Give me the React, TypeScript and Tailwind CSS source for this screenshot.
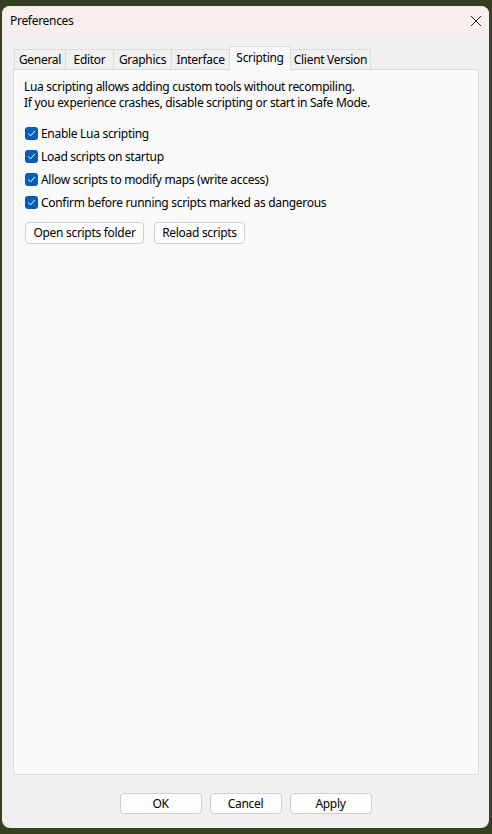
import { useState } from 'react';

const tabs = [
  { name: 'General', w: 'w-[52px]' },
  { name: 'Editor', w: 'w-[49px]' },
  { name: 'Graphics', w: 'w-[59px]' },
  { name: 'Interface', w: 'w-[59px]' },
  { name: 'Scripting', w: 'w-[62px]' },
  { name: 'Client Version', w: 'w-[81px]' },
];

const options = [
  'Enable Lua scripting',
  'Load scripts on startup',
  'Allow scripts to modify maps (write access)',
  'Confirm before running scripts marked as dangerous',
];

function Check({ checked }: { checked: boolean }) {
  return (
    <span className="flex h-[13px] w-[13px] items-center justify-center rounded-[3px] bg-[#005fb8]">
      {checked && (
        <svg width="9" height="9" viewBox="0 0 9 9" fill="none">
          <path d="M1.5 4.8 L3.6 6.8 L7.6 2.2" stroke="white" strokeWidth="1" strokeLinecap="round" strokeLinejoin="round" />
        </svg>
      )}
    </span>
  );
}

export default function App() {
  const [active] = useState('Scripting');
  const [checks, setChecks] = useState([true, true, true, true]);

  const toggle = (i: number) => {
    setChecks(checks.map((c, j) => (j === i ? !c : c)));
  };

  return (
    <div
      className="h-[834px] w-[492px] overflow-hidden bg-[#34401f] pl-[2px] pt-[6px] text-[12px] tracking-[-0.3px] text-black"
      style={{ fontFamily: '"Noto Sans", "Open Sans", sans-serif' }}
    >
      <div className="flex h-[822px] w-[487px] flex-col overflow-hidden rounded-[8px] bg-[#f0f0f0]">
        {/* Title bar */}
        <div className="flex h-[30px] items-center justify-between bg-[#f9eeee] pl-[8px] pr-[7px]">
          <span>Preferences</span>
          <svg width="12" height="12" viewBox="0 0 12 12">
            <path d="M1 1 L11 11 M11 1 L1 11" stroke="#1a1a1a" strokeWidth="1" />
          </svg>
        </div>

        <div className="flex flex-1 flex-col px-[11px] pt-[10px]">
          {/* Tabs */}
          <div className="relative z-10 flex h-[23px] items-end pl-[1px]">
            {tabs.map((t) => {
              const isActive = t.name === active;
              return (
                <div
                  key={t.name}
                  className={
                    isActive
                      ? `${t.w} -mb-[1px] -ml-[1px] flex h-[24px] items-start justify-center border border-b-0 border-[#dcdcdc] bg-[#f9f9f9] pt-[2px]`
                      : `${t.w} -ml-[1px] flex h-[20px] items-center justify-center border border-b-0 border-[#dcdcdc] bg-[#f0f0f0] first:ml-0`
                  }
                >
                  {t.name}
                </div>
              );
            })}
          </div>

          {/* Panel */}
          <div className="flex h-[706px] w-[466px] flex-col border border-[#dcdcdc] bg-[#f9f9f9] pl-[10px] pt-[9px]">
            <p className="leading-[16px]">
              Lua scripting allows adding custom tools without recompiling.
              <br />
              If you experience crashes, disable scripting or start in Safe Mode.
            </p>

            <div className="mt-[11px] flex flex-col">
              {options.map((o, i) => (
                <label key={o} className="flex h-[23px] cursor-pointer items-center gap-[3px] pl-[1px]" onClick={() => toggle(i)}>
                  <Check checked={checks[i]} />
                  <span>{o}</span>
                </label>
              ))}
            </div>

            <div className="ml-[1px] mt-[8px] flex gap-[10px]">
              <button className="h-[22px] w-[119px] rounded-[4px] border border-[#d0d0d0] bg-[#fdfdfd]">Open scripts folder</button>
              <button className="h-[22px] w-[91px] rounded-[4px] border border-[#d0d0d0] bg-[#fdfdfd]">Reload scripts</button>
            </div>
          </div>

          {/* Footer */}
          <div className="flex justify-center gap-[8px] pt-[18px]">
            <button className="h-[21px] w-[82px] rounded-[4px] border border-[#d0d0d0] bg-[#fdfdfd]">OK</button>
            <button className="h-[21px] w-[72px] rounded-[4px] border border-[#d0d0d0] bg-[#fdfdfd]">Cancel</button>
            <button className="h-[21px] w-[82px] rounded-[4px] border border-[#d0d0d0] bg-[#fdfdfd]">Apply</button>
          </div>
        </div>
      </div>
    </div>
  );
}
